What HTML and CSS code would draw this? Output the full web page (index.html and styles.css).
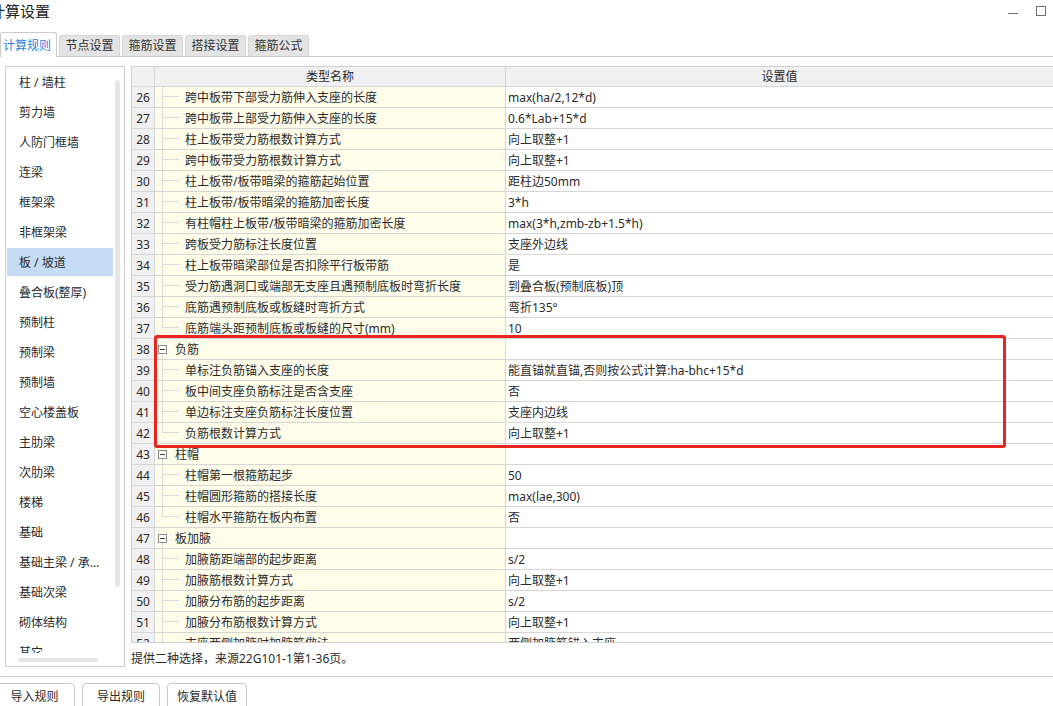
FILE: index.html
```html
<!DOCTYPE html>
<html lang="zh-CN">
<head>
<meta charset="utf-8">
<title>计算设置</title>
<link rel="stylesheet" href="styles.css">
</head>
<body>
<div class="window">
  <header class="titlebar">
    <span class="title">计算设置</span>
    <div class="winctrls">
      <span class="min"></span>
      <span class="max"></span>
    </div>
  </header>

  <nav class="tabs">
    <span class="tab active">计算规则</span>
    <span class="tab">节点设置</span>
    <span class="tab">箍筋设置</span>
    <span class="tab">搭接设置</span>
    <span class="tab">箍筋公式</span>
  </nav>

  <main class="content">
    <aside class="sidebar">
      <div class="side-body">
        <ul class="side-list">
          <li class="item">柱 / 墙柱</li>
          <li class="item">剪力墙</li>
          <li class="item">人防门框墙</li>
          <li class="item">连梁</li>
          <li class="item">框架梁</li>
          <li class="item">非框架梁</li>
          <li class="item sel">板 / 坡道</li>
          <li class="item">叠合板(整厚)</li>
          <li class="item">预制柱</li>
          <li class="item">预制梁</li>
          <li class="item">预制墙</li>
          <li class="item">空心楼盖板</li>
          <li class="item">主肋梁</li>
          <li class="item">次肋梁</li>
          <li class="item">楼梯</li>
          <li class="item">基础</li>
          <li class="item">基础主梁 / 承台梁</li>
          <li class="item">基础次梁</li>
          <li class="item">砌体结构</li>
          <li class="item">其它</li>
        </ul>
        <div class="vscroll"><div class="vthumb"></div></div>
      </div>
      <div class="hscroll"><div class="hthumb"></div></div>
    </aside>

    <section class="panel">
      <div class="table">
        <div class="row head">
          <div class="cell num"></div>
          <div class="cell hname">类型名称</div>
          <div class="cell hval">设置值</div>
        </div>

        <div class="row"><div class="cell num">26</div><div class="cell name"><span class="branch"></span>跨中板带下部受力筋伸入支座的长度</div><div class="cell val">max(ha/2,12*d)</div></div>
        <div class="row"><div class="cell num">27</div><div class="cell name"><span class="branch"></span>跨中板带上部受力筋伸入支座的长度</div><div class="cell val">0.6*Lab+15*d</div></div>
        <div class="row"><div class="cell num">28</div><div class="cell name"><span class="branch"></span>柱上板带受力筋根数计算方式</div><div class="cell val">向上取整+1</div></div>
        <div class="row"><div class="cell num">29</div><div class="cell name"><span class="branch"></span>跨中板带受力筋根数计算方式</div><div class="cell val">向上取整+1</div></div>
        <div class="row"><div class="cell num">30</div><div class="cell name"><span class="branch"></span>柱上板带/板带暗梁的箍筋起始位置</div><div class="cell val">距柱边50mm</div></div>
        <div class="row"><div class="cell num">31</div><div class="cell name"><span class="branch"></span>柱上板带/板带暗梁的箍筋加密长度</div><div class="cell val">3*h</div></div>
        <div class="row"><div class="cell num">32</div><div class="cell name"><span class="branch"></span>有柱帽柱上板带/板带暗梁的箍筋加密长度</div><div class="cell val">max(3*h,zmb-zb+1.5*h)</div></div>
        <div class="row"><div class="cell num">33</div><div class="cell name"><span class="branch"></span>跨板受力筋标注长度位置</div><div class="cell val">支座外边线</div></div>
        <div class="row"><div class="cell num">34</div><div class="cell name"><span class="branch"></span>柱上板带暗梁部位是否扣除平行板带筋</div><div class="cell val">是</div></div>
        <div class="row"><div class="cell num">35</div><div class="cell name"><span class="branch"></span>受力筋遇洞口或端部无支座且遇预制底板时弯折长度</div><div class="cell val">到叠合板(预制底板)顶</div></div>
        <div class="row"><div class="cell num">36</div><div class="cell name"><span class="branch"></span>底筋遇预制底板或板缝时弯折方式</div><div class="cell val">弯折135°</div></div>
        <div class="row"><div class="cell num">37</div><div class="cell name"><span class="branch last"></span>底筋端头距预制底板或板缝的尺寸(mm)</div><div class="cell val">10</div></div>

        <div class="row"><div class="cell num">38</div><div class="cell name group"><span class="node"><span class="box"></span></span>负筋</div><div class="cell val"></div></div>
        <div class="row"><div class="cell num">39</div><div class="cell name"><span class="branch"></span>单标注负筋锚入支座的长度</div><div class="cell val">能直锚就直锚,否则按公式计算:ha-bhc+15*d</div></div>
        <div class="row"><div class="cell num">40</div><div class="cell name"><span class="branch"></span>板中间支座负筋标注是否含支座</div><div class="cell val">否</div></div>
        <div class="row"><div class="cell num">41</div><div class="cell name"><span class="branch"></span>单边标注支座负筋标注长度位置</div><div class="cell val">支座内边线</div></div>
        <div class="row"><div class="cell num">42</div><div class="cell name"><span class="branch last"></span>负筋根数计算方式</div><div class="cell val">向上取整+1</div></div>

        <div class="row"><div class="cell num">43</div><div class="cell name group"><span class="node"><span class="box"></span></span>柱帽</div><div class="cell val"></div></div>
        <div class="row"><div class="cell num">44</div><div class="cell name"><span class="branch"></span>柱帽第一根箍筋起步</div><div class="cell val">50</div></div>
        <div class="row"><div class="cell num">45</div><div class="cell name"><span class="branch"></span>柱帽圆形箍筋的搭接长度</div><div class="cell val">max(lae,300)</div></div>
        <div class="row"><div class="cell num">46</div><div class="cell name"><span class="branch last"></span>柱帽水平箍筋在板内布置</div><div class="cell val">否</div></div>

        <div class="row"><div class="cell num">47</div><div class="cell name group"><span class="node"><span class="box"></span></span>板加腋</div><div class="cell val"></div></div>
        <div class="row"><div class="cell num">48</div><div class="cell name"><span class="branch"></span>加腋筋距端部的起步距离</div><div class="cell val">s/2</div></div>
        <div class="row"><div class="cell num">49</div><div class="cell name"><span class="branch"></span>加腋筋根数计算方式</div><div class="cell val">向上取整+1</div></div>
        <div class="row"><div class="cell num">50</div><div class="cell name"><span class="branch"></span>加腋分布筋的起步距离</div><div class="cell val">s/2</div></div>
        <div class="row"><div class="cell num">51</div><div class="cell name"><span class="branch"></span>加腋分布筋根数计算方式</div><div class="cell val">向上取整+1</div></div>
        <div class="row"><div class="cell num">52</div><div class="cell name"><span class="branch"></span>支座两侧加腋时加腋筋做法</div><div class="cell val">两侧加腋筋锚入支座</div></div>

        <div class="mark"></div>
      </div>
      <p class="status">提供二种选择，来源22G101-1第1-36页。</p>
    </section>
  </main>

  <footer class="actions">
    <button class="btn first">导入规则</button>
    <button class="btn second">导出规则</button>
    <button class="btn">恢复默认值</button>
  </footer>
</div>
</body>
</html>
```

FILE: styles.css
```css
html, body {
  margin: 0;
  padding: 0;
  width: 1053px;
  height: 706px;
  overflow: hidden;
  background: #ffffff;
}

body {
  font-family: "Noto Sans", "Noto Sans CJK SC", sans-serif;
  font-size: 12px;
  color: #2b2b2b;
}

.window {
  width: 1053px;
  height: 706px;
  overflow: hidden;
}

/* title bar */
.titlebar {
  display: flex;
  align-items: flex-start;
  height: 32px;
}

.title {
  margin-left: -10px;
  font-size: 15px;
  line-height: 22px;
  color: #222;
}

.winctrls {
  margin-left: auto;
  display: flex;
  align-items: flex-start;
  gap: 18px;
  padding-right: 7px;
}

.min {
  width: 10px;
  height: 1px;
  margin-top: 13px;
  background: #707070;
}

.max {
  width: 10px;
  height: 10px;
  margin-top: 6px;
  border: 1px solid #707070;
  box-sizing: border-box;
}

/* tabs */
.tabs {
  display: flex;
  align-items: flex-end;
  height: 24px;
  border-bottom: 1px solid #cacaca;
}

.tab {
  box-sizing: border-box;
  height: 21px;
  line-height: 20px;
  padding: 0 5.5px;
  margin-left: 2px;
  background: #e3e3e3;
  border: 1px solid #d6d6d6;
  border-bottom: none;
  border-radius: 3px 3px 0 0;
  color: #333;
  white-space: nowrap;
}

.tab.active {
  height: 25px;
  line-height: 25px;
  margin-left: 0;
  margin-bottom: -1px;
  padding: 0 5px 0 2px;
  background: #ffffff;
  border-color: #cacaca;
  color: #2f7fd6;
}

/* content */
.content {
  display: flex;
  gap: 6px;
  height: 620px;
  box-sizing: border-box;
  padding: 9px 0 0 5px;
  border-bottom: 1px solid #cacaca;
}

.sidebar {
  flex: none;
  width: 120px;
  height: 601px;
  box-sizing: border-box;
  border: 1px solid #cfcfcf;
  display: flex;
  flex-direction: column;
}

.side-body {
  display: flex;
  height: 586px;
}

.side-list {
  list-style: none;
  margin: 0;
  width: 107px;
  padding: 0 0 0 1px;
  box-sizing: border-box;
  overflow: hidden;
}

.item {
  height: 30px;
  box-sizing: border-box;
  padding: 2px 5px 0 12px;
  line-height: 28px;
  white-space: nowrap;
  overflow: hidden;
  text-overflow: ellipsis;
  color: #2b2b2b;
}

.item.sel {
  background: linear-gradient(#c4dbf3, #c4dbf3) center / 100% 28px no-repeat;
}

.vscroll {
  width: 11px;
  padding-left: 2px;
  box-sizing: border-box;
}

.vthumb {
  width: 5px;
  height: 507px;
  margin-top: 13px;
  background: #e6e6e6;
  border-radius: 3px;
}

.hscroll {
  height: 13px;
}

.hthumb {
  width: 80px;
  height: 4px;
  margin: 5px 0 0 12px;
  background: #e6e6e6;
  border-radius: 2px;
}

/* grid panel */
.panel {
  flex: 1;
  min-width: 0;
  display: flex;
  flex-direction: column;
}

.table {
  position: relative;
  height: 577px;
  box-sizing: border-box;
  border: 1px solid #cfcfcf;
  border-right: none;
  overflow: hidden;
}

.row {
  display: grid;
  grid-template-columns: 23px 351px 1fr;
  height: 21px;
}

.cell {
  box-sizing: border-box;
  border-right: 1px solid #d6d6d6;
  border-bottom: 1px solid #d6d6d6;
  line-height: 22px;
  white-space: nowrap;
  overflow: hidden;
}

.row.head {
  height: 20px;
}

.row.head .cell {
  line-height: 20px;
  background: #f0f0f0;
  text-align: center;
}

.hval {
  border-right: none;
}

.num {
  background: #f0f0f0;
  text-align: center;
}

.name {
  display: flex;
  align-items: stretch;
  padding-left: 7px;
  background: #fffdea;
}

.branch {
  flex: none;
  width: 17px;
  margin-right: 6px;
  background:
    linear-gradient(#d9d9d9, #d9d9d9) 0 0 / 1px 100% no-repeat,
    linear-gradient(#d9d9d9, #d9d9d9) 0 9px / 100% 1px no-repeat;
}

.branch.last {
  background:
    linear-gradient(#d9d9d9, #d9d9d9) 0 0 / 1px 10px no-repeat,
    linear-gradient(#d9d9d9, #d9d9d9) 0 9px / 100% 1px no-repeat;
}

.name.group {
  padding-left: 3px;
}

.node {
  flex: none;
  width: 9px;
  margin-right: 8px;
  display: flex;
  align-items: center;
  background: linear-gradient(#d9d9d9, #d9d9d9) 4px 100% / 1px 50% no-repeat;
}

.box {
  width: 9px;
  height: 9px;
  box-sizing: border-box;
  border: 1px solid #8a8a8a;
  background:
    linear-gradient(#444, #444) center / 5px 1px no-repeat,
    #ffffff;
}

.val {
  padding-left: 2px;
  background: #ffffff;
  border-right: none;
}

.mark {
  position: absolute;
  left: 22px;
  top: 268px;
  width: 852px;
  height: 113px;
  box-sizing: border-box;
  border: 3px solid #e8261f;
  border-radius: 3px;
  pointer-events: none;
}

.status {
  margin: 0;
  height: 33px;
  line-height: 31px;
  color: #2b2b2b;
}

/* footer */
.actions {
  display: flex;
  gap: 7px;
  padding-top: 6px;
}

.btn {
  flex: none;
  width: 80px;
  height: 28px;
  padding: 0;
  box-sizing: border-box;
  border: 1px solid #c9c9c9;
  border-radius: 4px;
  background: #ffffff;
  font-family: "Noto Sans", "Noto Sans CJK SC", sans-serif;
  font-size: 12px;
  line-height: 26px;
  color: #2b2b2b;
}

.btn.first {
  width: 81px;
  margin-left: -6px;
}

.btn.second {
  width: 78px;
}
```
